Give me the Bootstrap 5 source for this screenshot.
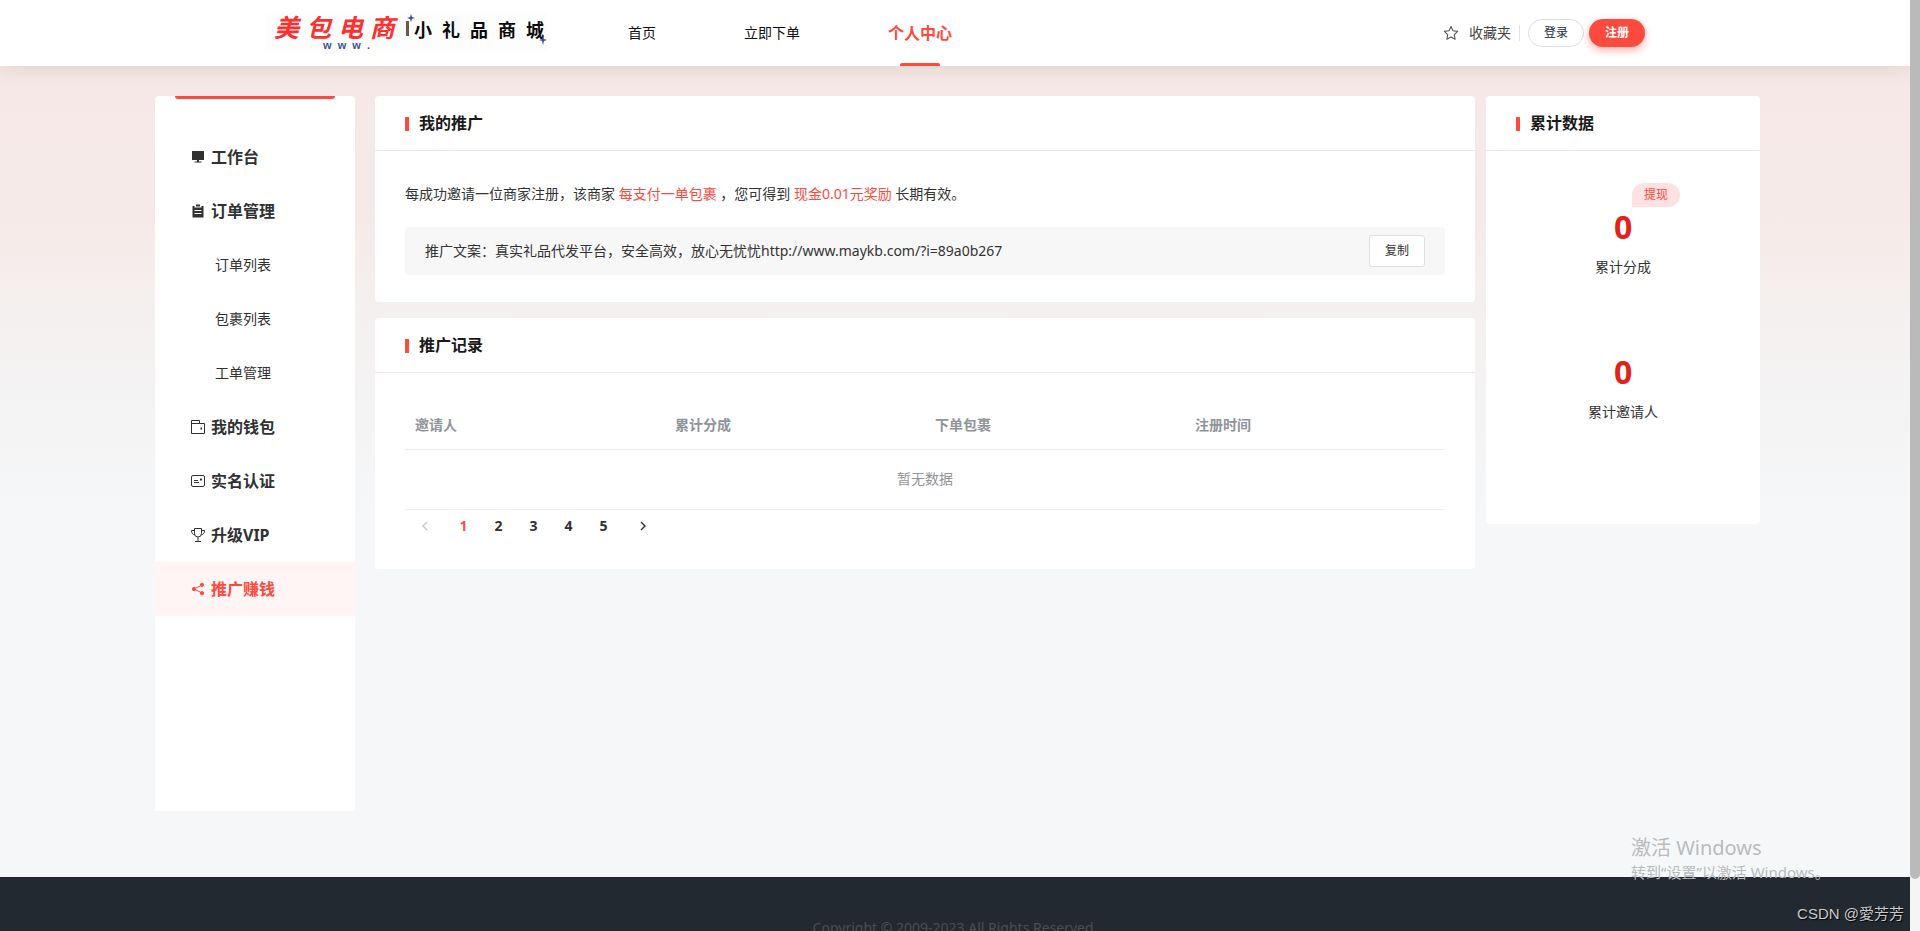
<!DOCTYPE html>
<html lang="zh-CN">
<head>
<meta charset="utf-8">
<meta name="viewport" content="width=device-width, initial-scale=1">
<title>我的推广 - 小礼品商城</title>
<link href="https://cdn.jsdelivr.net/npm/bootstrap@5.3.0/dist/css/bootstrap.min.css" rel="stylesheet">
<style>
:root { --brand: #fc4a3e; --line: #e8e8e8; }
body { font-family: "Noto Sans", "Noto Sans CJK SC", sans-serif; font-size: 14px; line-height: 20px; color: #333; }
a { color: inherit; text-decoration: none; }
.shell { height: 100vh; }
.scroll-rail { width: 10px; background: #f5f5f5; }
.scroll-thumb { height: 94.4%; background: #bababa; border-radius: 0 0 5px 5px; }
.page-body { background: linear-gradient(#f5e8e6 66px, #f6eae8 220px, #f4f0ef 310px, #f4f3f3 400px, #f5f7f9 520px); }

.site-head { height: 66px; padding-left: 265px; padding-right: 265px; box-shadow: 0 2px 20px rgba(90, 40, 30, .12); z-index: 2; }
.site-logo { width: 282px; height: 40px; }
.main-menu { margin-left: 45px; }
.main-menu a { display: flex; align-items: center; height: 66px; padding: 0 8px; margin: 0 28px; color: #111; position: relative; }
.main-menu li + li a { margin-left: 44px; }
.main-menu a.active { color: var(--brand); font-size: 16px; font-weight: 700; }
.main-menu a.active::after { content: ""; position: absolute; bottom: 0; left: 50%; width: 40px; height: 3px; margin-left: -20px; background: var(--brand); border-radius: 2px 2px 0 0; }
.fav { gap: 10px; padding-right: 8px; border-right: 1px solid #e4e4e8; height: 16px; color: #444; }
.btn-pill { width: 56px; height: 28px; padding: 0; font-size: 12px; line-height: 18px; border-radius: 14px; }
.btn-login { border: 1px solid #dcdfe6; color: #222b3d; background: #fff; }
.btn-join { background: var(--brand); color: #fff; font-weight: 700; margin-left: 5px; box-shadow: 0 3px 8px rgba(252, 74, 62, .45); }

.content-area { padding: 30px 150px 66px 155px; }
.side-menu { width: 200px; min-height: 715px; padding-top: 34px; margin-right: 20px; background: #fff; border-radius: 4px 4px 0 0; position: relative; }
.side-menu::before { content: ""; position: absolute; top: 0; left: 20px; right: 20px; height: 3px; background: var(--brand); border-radius: 0 0 3px 3px; }
.side-menu a { display: flex; align-items: center; gap: 6px; height: 54px; padding-left: 36px; font-size: 16px; font-weight: 700; color: #303133; }
.side-menu a.sub { padding-left: 60px; font-size: 14px; font-weight: 400; }
.side-menu a.active { color: var(--brand); background: #fff5f4; }

.panel { background: #fff; border-radius: 4px; }
.panel-title { height: 55px; margin: 0; padding: 2px 30px 0; gap: 10px; border-bottom: 1px solid var(--line); font-size: 16px; font-weight: 700; color: #1a1a1a; }
.panel-title::before { content: ""; width: 4px; height: 14px; background: var(--brand); }
.invite { padding: 33px 30px 27px; }
.hot { color: var(--brand); }
.copy-row { height: 48px; margin-top: 23px; padding: 0 20px; background: #f7f7f7; border-radius: 4px; }
.btn-copy { width: 56px; height: 32px; padding: 0; font-size: 12px; border: 1px solid #dcdfe6; border-radius: 3px; background: #fff; color: #303133; }
.records { padding: 29px 30px; }
.records-table { table-layout: fixed; color: #909399; }
.records-table th { height: 47px; padding: 0 10px; vertical-align: middle; color: #909399; background: none; border-bottom: 1px solid #ebeef5; }
.records-table td { height: 60px; padding: 0; vertical-align: middle; color: #909399; background: none; border-bottom: 1px solid #ebeef5; }
.pager { padding: 2px 0 0 2px; font-size: 14px; font-weight: 700; color: #303133; }
.pager a, .pager button { display: flex; align-items: center; justify-content: center; width: 35px; height: 28px; padding: 0; border: 0; background: none; color: inherit; }
.pager .prev { margin-right: 4px; color: #c0c4cc; }
.pager .next { margin-left: 4px; }
.pager .active { color: #ff4949; }

.totals { width: 274px; min-height: 428px; margin-left: 11px; }
.total-item { height: 145px; padding-top: 56px; position: relative; }
.total-num { font-size: 32px; line-height: 40px; font-weight: 700; color: #e4211b; }
.total-label { margin-top: 10px; }
.cash-tag { position: absolute; left: 146px; top: 32px; width: 48px; height: 24px; padding: 0; border: 0; font-size: 12px; line-height: 24px; color: var(--brand); background: #ffe1e1; border-radius: 12px 12px 12px 0; }

.site-foot { height: 109px; padding-top: 41px; background: #232930; color: #4b4e53; }
.os-note { position: absolute; left: 1631px; top: 835px; color: #b9bbbd; line-height: 25px; font-size: 20px; z-index: 3; white-space: nowrap; }
.os-note small { display: block; font-size: 15px; line-height: 24px; }
.author-mark { position: absolute; right: 16px; bottom: 6px; font-family: "Liberation Sans", "Noto Sans CJK SC", sans-serif; font-size: 15px; line-height: 22px; color: #c9cbcd; text-shadow: 1px 1px 1px #000; z-index: 3; }
</style>
</head>
<body>
<div class="shell d-flex overflow-hidden position-relative">
  <div class="page-body flex-grow-1 overflow-hidden">

    <header class="site-head d-flex align-items-center bg-white position-relative">
      <a href="#" aria-label="首页">
        <svg class="site-logo d-block" viewBox="0 0 282 40" xml:space="preserve">
          <rect width="282" height="40" fill="#fdfdfd"/>
          <text x="9" y="24" style="white-space:pre" font-family="'Liberation Sans','Noto Sans CJK SC',sans-serif" font-size="25" font-weight="700" font-style="italic" fill="#fb3030">美 包 电 商</text>
          <text x="58" y="36" style="white-space:pre" font-family="'Liberation Sans',sans-serif" font-size="11" font-weight="700" fill="#3a539b">w  w  w  .</text>
          <rect x="141" y="8" width="3" height="15" fill="#6b5a48"/>
          <text x="149" y="24" style="white-space:pre" font-family="'Liberation Sans','Noto Sans CJK SC',sans-serif" font-size="18" font-weight="700" fill="#0b0b0b">小  礼  品  商  城</text>
          <path d="M146 1l1 3 3 1-3 1-1 3-1-3-3-1 3-1zM278 23l1 3 3 1-3 1-1 4-1-4-3-1 3-1z" fill="#3a539b"/>
        </svg>
      </a>
      <nav class="main-menu">
        <ul class="list-unstyled d-flex m-0">
          <li><a href="#">首页</a></li>
          <li><a href="#">立即下单</a></li>
          <li><a href="#" class="active">个人中心</a></li>
        </ul>
      </nav>
      <div class="d-flex align-items-center ms-auto">
        <a href="#" class="fav d-flex align-items-center">
          <svg width="16" height="16" viewBox="0 0 16 16" fill="none" stroke="#555" stroke-width="1.1" stroke-linejoin="round"><path d="M8 1.5l2 4.3 4.7.6-3.4 3.2.8 4.7L8 12.1l-4.1 2.2.8-4.7L1.3 6.4 6 5.8z"/></svg>
          <span>收藏夹</span>
        </a>
        <button type="button" class="btn btn-pill btn-login ms-2">登录</button>
        <button type="button" class="btn btn-pill btn-join">注册</button>
      </div>
    </header>

    <main class="content-area d-flex align-items-start">
      <nav class="side-menu flex-shrink-0">
        <a href="#"><svg width="14" height="14" viewBox="0 0 14 14" fill="currentColor"><path d="M1 1h12v9H1zM6 10h2v1.5h2.5v1h-7v-1H6z"/></svg>工作台</a>
        <a href="#"><svg width="14" height="14" viewBox="0 0 14 14"><path fill="currentColor" d="M1.500 2h2v1.500h7V2h2v11.500h-11zM5 .5h4v2H5z"/><path stroke="#fff" d="M3.500 6.500h7M3.500 9.500h7"/></svg>订单管理</a>
        <a href="#" class="sub">订单列表</a>
        <a href="#" class="sub">包裹列表</a>
        <a href="#" class="sub">工单管理</a>
        <a href="#"><svg width="14" height="14" viewBox="0 0 14 14" fill="none" stroke="currentColor"><path d="M.5 13.500V.5h8v3h5v10zM.5 3.500h8"/><path stroke-width="2" d="M9.500 8.500h1.500"/></svg>我的钱包</a>
        <a href="#"><svg width="14" height="14" viewBox="0 0 14 14" fill="none" stroke="currentColor"><rect x=".5" y="1.500" width="13" height="11" rx="1.500"/><path d="M3 6.500h4M3 8.500h5"/><path stroke-width="2" d="M9 5.500h2"/></svg>实名认证</a>
        <a href="#"><svg width="14" height="14" viewBox="0 0 14 14" fill="none" stroke="currentColor"><path d="M3.500.5h7v5a3.500 3.500 0 0 1-7 0zM3.500 2.500h-3c0 2.500 1 4 3.300 4.300M10.500 2.500h3c0 2.500-1 4-3.300 4.300M7 9v4M4 13.500h6"/></svg>升级VIP</a>
        <a href="#" class="active"><svg width="14" height="14" viewBox="0 0 14 14" fill="currentColor" stroke="currentColor"><path fill="none" d="M11 3L3 7l8 4"/><circle cx="11" cy="2.800" r="1.600"/><circle cx="3" cy="7" r="1.600"/><circle cx="11" cy="11.200" r="1.600"/></svg>推广赚钱</a>
      </nav>

      <div class="flex-grow-1 d-flex flex-column gap-3">
        <section class="panel">
          <h2 class="panel-title d-flex align-items-center">我的推广</h2>
          <div class="invite">
            <p class="m-0">每成功邀请一位商家注册，该商家 <span class="hot">每支付一单包裹</span> ，您可得到 <span class="hot">现金0.01元奖励</span> 长期有效。</p>
            <div class="copy-row d-flex align-items-center justify-content-between">
              <span>推广文案：真实礼品代发平台，安全高效，放心无忧忧http://www.maykb.com/?i=89a0b267</span>
              <button type="button" class="btn btn-copy">复制</button>
            </div>
          </div>
        </section>

        <section class="panel">
          <h2 class="panel-title d-flex align-items-center">推广记录</h2>
          <div class="records">
            <table class="table records-table m-0">
              <thead><tr><th>邀请人</th><th>累计分成</th><th>下单包裹</th><th>注册时间</th></tr></thead>
              <tbody><tr><td colspan="4" class="text-center">暂无数据</td></tr></tbody>
            </table>
            <nav class="pager d-flex" aria-label="分页">
              <button type="button" class="prev" aria-label="上一页" disabled><svg width="8" height="12" viewBox="0 0 8 12" fill="none" stroke="currentColor" stroke-width="1.400"><path d="M6 2L2 6l4 4"/></svg></button>
              <a href="#" class="active">1</a>
              <a href="#">2</a>
              <a href="#">3</a>
              <a href="#">4</a>
              <a href="#">5</a>
              <button type="button" class="next" aria-label="下一页"><svg width="8" height="12" viewBox="0 0 8 12" fill="none" stroke="currentColor" stroke-width="1.400"><path d="M2 2l4 4-4 4"/></svg></button>
            </nav>
          </div>
        </section>
      </div>

      <aside class="panel totals flex-shrink-0">
        <h2 class="panel-title d-flex align-items-center">累计数据</h2>
        <div class="total-item text-center">
          <button type="button" class="cash-tag">提现</button>
          <div class="total-num">0</div>
          <div class="total-label">累计分成</div>
        </div>
        <div class="total-item text-center">
          <div class="total-num">0</div>
          <div class="total-label">累计邀请人</div>
        </div>
      </aside>
    </main>

    <footer class="site-foot text-center">Copyright © 2009-2023 All Rights Reserved.</footer>
  </div>
  <div class="scroll-rail flex-shrink-0"><div class="scroll-thumb"></div></div>
  <div class="os-note">激活 Windows<small>转到“设置”以激活 Windows。</small></div>
  <div class="author-mark">CSDN @愛芳芳</div>
</div>
<script src="https://cdn.jsdelivr.net/npm/bootstrap@5.3.0/dist/js/bootstrap.bundle.min.js"></script>
</body>
</html>
